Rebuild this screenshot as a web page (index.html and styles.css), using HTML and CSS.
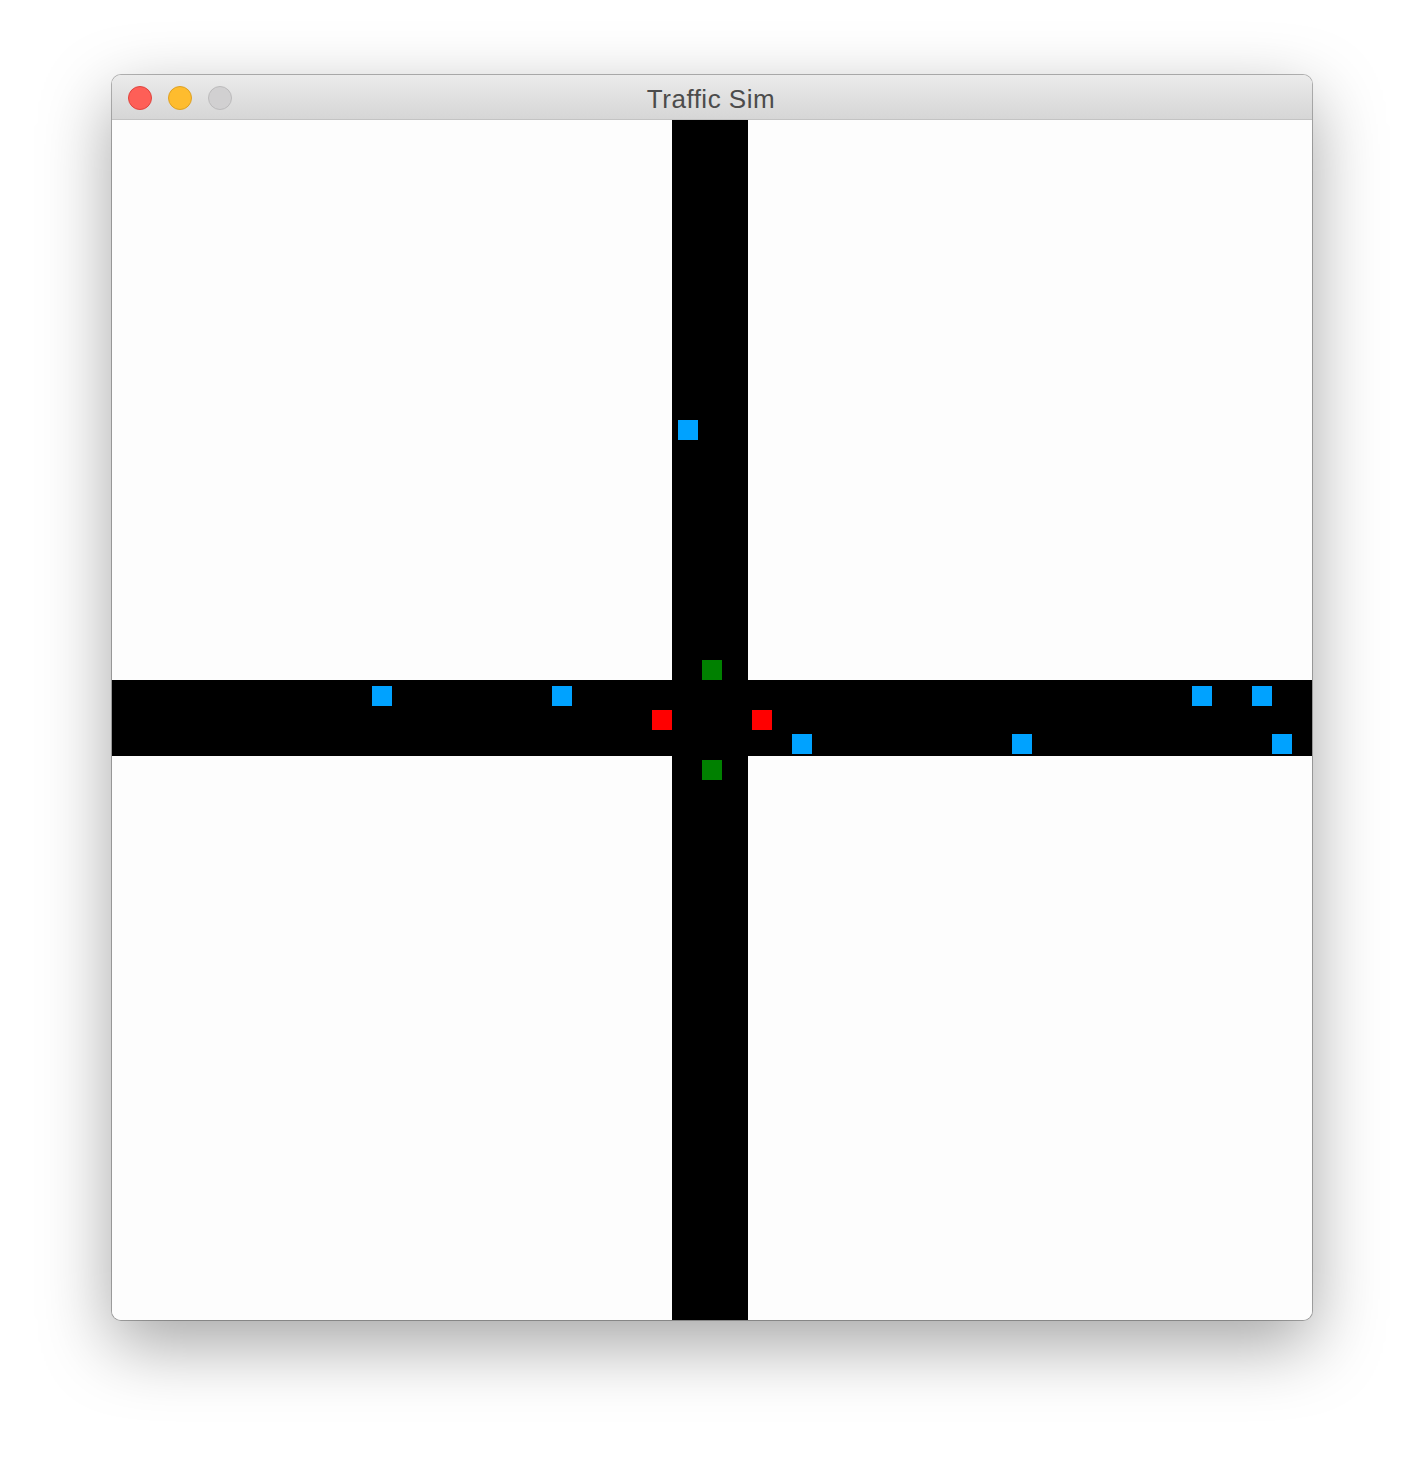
FILE: index.html
```html
<!DOCTYPE html>
<html>
<head>
<meta charset="utf-8">
<title>Traffic Sim</title>
<link rel="stylesheet" href="styles.css">
</head>
<body>
<div class="window">
  <div class="titlebar">
    <div class="lights">
      <span class="light close"></span>
      <span class="light min"></span>
      <span class="light max"></span>
    </div>
    <div class="title">Traffic Sim</div>
  </div>
  <div class="canvas">
    <div class="road road-v"></div>
    <div class="road road-h"></div>
    <div class="car" style="left:566px;top:300px"></div>
    <div class="car" style="left:260px;top:566px"></div>
    <div class="car" style="left:440px;top:566px"></div>
    <div class="car" style="left:1080px;top:566px"></div>
    <div class="car" style="left:1140px;top:566px"></div>
    <div class="car" style="left:680px;top:614px"></div>
    <div class="car" style="left:900px;top:614px"></div>
    <div class="car" style="left:1160px;top:614px"></div>
    <div class="signal green" style="left:590px;top:540px"></div>
    <div class="signal green" style="left:590px;top:640px"></div>
    <div class="signal red" style="left:540px;top:590px"></div>
    <div class="signal red" style="left:640px;top:590px"></div>
  </div>
</div>
</body>
</html>
```
FILE: styles.css
```css
html, body {
  margin: 0;
  padding: 0;
  background: #ffffff;
}
body {
  width: 1424px;
  height: 1468px;
  overflow: hidden;
  font-family: "Liberation Sans", Arial, sans-serif;
}
.window {
  margin: 75px 0 0 112px;
  width: 1200px;
  border-radius: 9px;
  overflow: hidden;
  background: #fdfdfd;
  box-shadow: 0 0 0 1px rgba(0,0,0,0.28), 0 24px 70px rgba(0,0,0,0.36);
}
.titlebar {
  position: relative;
  height: 44px;
  border-bottom: 1px solid #c3c3c3;
  background: linear-gradient(#ebebeb, #d6d6d6);
  display: flex;
  align-items: center;
  justify-content: center;
}
.lights {
  position: absolute;
  left: 16px;
  top: 11px;
  display: flex;
  gap: 16px;
}
.light {
  display: block;
  width: 22px;
  height: 22px;
  border-radius: 50%;
  border: 1px solid;
}
.close { background: #fe5f57; border-color: #e0443e; }
.min { background: #febc2e; border-color: #dea123; }
.max { background: #d1d0d1; border-color: #bcbbbc; }
.title {
  font-size: 26px;
  color: #4c4c4c;
  letter-spacing: 0.5px;
  margin-left: -2px;
  margin-top: 5px;
}
.canvas {
  position: relative;
  width: 1200px;
  height: 1200px;
  background: #fdfdfd;
}
.road {
  position: absolute;
  background: #000;
}
.road-v {
  left: 560px;
  top: 0;
  width: 76px;
  height: 1200px;
}
.road-h {
  left: 0;
  top: 560px;
  width: 1200px;
  height: 76px;
}
.car, .signal {
  position: absolute;
  width: 20px;
  height: 20px;
}
.car { background: #00a2ff; }
.green { background: #008000; }
.red { background: #ff0000; }
```
